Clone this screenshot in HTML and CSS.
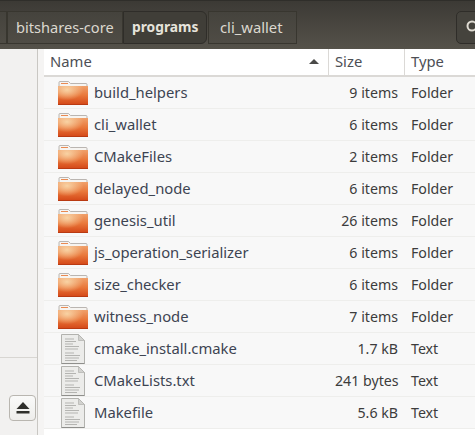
FILE: index.html
```html
<!DOCTYPE html>
<html lang="en">
<head>
    <meta charset="UTF-8">
    <title>cli_wallet</title>
    <link rel="stylesheet" href="styles.css">
</head>
<body>
    <svg class="defs" width="0" height="0">
        <defs>
            <linearGradient id="folder-fill" x1="0" y1="0" x2="0" y2="1">
                <stop offset="0" stop-color="#f0a06a"/>
                <stop offset="0.5" stop-color="#e9773a"/>
                <stop offset="1" stop-color="#d34516"/>
            </linearGradient>
            <radialGradient id="folder-glow" cx="0.3" cy="0.2" r="0.55">
                <stop offset="0" stop-color="#f9d6a8" stop-opacity="0.95"/>
                <stop offset="1" stop-color="#f9d6a8" stop-opacity="0"/>
            </radialGradient>
            <symbol id="folder" viewBox="0 0 30 24">
                <path d="M1 6V1.500Q1 .5 2 .5h8.500l2 2H28q1 0 1 1V6z" fill="#f6f4f1" stroke="#aaa59f" stroke-width=".8"/>
                <rect x="3" y="2" width="7" height="1" fill="#e98a52"/>
                <path d="M0 5h30v18q0 1-1 1H1q-1 0-1-1z" fill="url(#folder-fill)"/>
                <path d="M0 5h30v18q0 1-1 1H1q-1 0-1-1z" fill="url(#folder-glow)"/>
                <rect x="0" y="23" width="30" height="1" fill="#b93a12"/>
            </symbol>
            <symbol id="textfile" viewBox="0 0 24 30">
                <path d="M.5.5h17l6 6v23H.5z" fill="#ececea" stroke="#b2b2ae"/>
                <path d="M.5 29.500h23" stroke="#8f8f8c"/>
                <path d="M17.500.5v6h6z" fill="#d2d2cf" stroke="#b2b2ae" stroke-width=".7"/>
                <path d="M4 5h9M4 7.500h11M4 10h8M4 12.500h14M4 15h13M4 19h9M4 21.500h15M4 24h14M4 26.500h12" stroke="#b4b4b1" stroke-width="1" fill="none"/>
            </symbol>
        </defs>
    </svg>

    <header class="toolbar">
        <nav class="pathbar">
            <span class="crumb stub"></span>
            <span class="crumb first">bitshares-core</span>
            <span class="crumb current">programs</span>
            <span class="crumb last">cli_wallet</span>
        </nav>
        <div class="search-btn">
            <svg width="16" height="16" viewBox="0 0 16 16"><circle cx="7" cy="7" r="4.500" fill="none" stroke="#dfdbd2" stroke-width="2"/></svg>
        </div>
    </header>

    <main class="main">
        <aside class="sidebar">
            <div class="side-places"></div>
            <div class="side-devices">
                <button class="eject" type="button">
                    <svg width="14" height="12" viewBox="0 0 14 12"><path d="M7 0l6.500 7H.5z" fill="#2f2f2b"/><rect x=".5" y="9" width="13" height="2.500" fill="#2f2f2b"/></svg>
                </button>
            </div>
        </aside>
        <div class="gutter"></div>
        <section class="files">
            <div class="head">
                <div class="col-name">Name <span class="sort-arrow"></span></div>
                <div class="col-size">Size</div>
                <div class="col-type">Type</div>
            </div>
            <div class="row"><svg class="icon-folder"><use href="#folder"/></svg><span class="name">build_helpers</span><span class="size">9 items</span><span class="type">Folder</span></div>
            <div class="row"><svg class="icon-folder"><use href="#folder"/></svg><span class="name">cli_wallet</span><span class="size">6 items</span><span class="type">Folder</span></div>
            <div class="row"><svg class="icon-folder"><use href="#folder"/></svg><span class="name">CMakeFiles</span><span class="size">2 items</span><span class="type">Folder</span></div>
            <div class="row"><svg class="icon-folder"><use href="#folder"/></svg><span class="name">delayed_node</span><span class="size">6 items</span><span class="type">Folder</span></div>
            <div class="row"><svg class="icon-folder"><use href="#folder"/></svg><span class="name">genesis_util</span><span class="size">26 items</span><span class="type">Folder</span></div>
            <div class="row"><svg class="icon-folder"><use href="#folder"/></svg><span class="name">js_operation_serializer</span><span class="size">6 items</span><span class="type">Folder</span></div>
            <div class="row"><svg class="icon-folder"><use href="#folder"/></svg><span class="name">size_checker</span><span class="size">6 items</span><span class="type">Folder</span></div>
            <div class="row"><svg class="icon-folder"><use href="#folder"/></svg><span class="name">witness_node</span><span class="size">7 items</span><span class="type">Folder</span></div>
            <div class="row"><svg class="icon-file"><use href="#textfile"/></svg><span class="name">cmake_install.cmake</span><span class="size">1.7 kB</span><span class="type">Text</span></div>
            <div class="row"><svg class="icon-file"><use href="#textfile"/></svg><span class="name">CMakeLists.txt</span><span class="size">241 bytes</span><span class="type">Text</span></div>
            <div class="row"><svg class="icon-file"><use href="#textfile"/></svg><span class="name">Makefile</span><span class="size">5.6 kB</span><span class="type">Text</span></div>
        </section>
    </main>
</body>
</html>
```

FILE: styles.css
```css
*{
    box-sizing: border-box;
}

html, body{
    margin: 0;
    height: 100%;
    overflow: hidden;
}

body{
    display: flex;
    flex-direction: column;
    background-color: white;
    font-family: "Noto Sans", sans-serif;
    font-size: 14.8px;
    color: #3c3c3c;
}

.defs{
    position: absolute;
}

.toolbar{
    height: 49px;
    flex-shrink: 0;
    display: flex;
    justify-content: space-between;
    padding: 10px 0 0 0;
    background: linear-gradient(#3c3a35, #55524a);
    border-top: 1px solid #2f2e2a;
}

.pathbar{
    display: flex;
    height: 33px;
    margin-left: -4px;
}

.crumb{
    display: flex;
    align-items: center;
    height: 33px;
    padding: 0 8px 2px 8px;
    color: #dcd8cf;
    background: linear-gradient(#45433d, #4f4c45);
    border: 1px solid #38362f;
}

.stub{
    width: 11px;
    padding: 0;
}

.first{
    width: 116px;
    font-size: 14.6px;
    white-space: nowrap;
}

.current{
    width: 84px;
    font-size: 13.8px;
    font-weight: bold;
    background: #403e38;
    border-radius: 0 6px 6px 0;
    color: #e6e3db;
    border-color: #2f2d29;
}

.last{
    width: 89px;
    padding: 0 0 2px 11px;
    margin-left: 1px;
}

.search-btn{
    width: 30px;
    height: 33px;
    margin-right: -11px;
    padding: 7px 0 0 8px;
    border: 1px solid #2f2d29;
    border-radius: 5px;
    background: #45433d;
}

.main{
    flex: 1;
    display: flex;
    min-height: 0;
}

.sidebar{
    width: 38px;
    flex-shrink: 0;
    display: flex;
    flex-direction: column;
    background-color: #f2f1f0;
    border-right: 1px solid #c9c7c3;
}

.side-places{
    height: 309px;
    border-bottom: 1px solid #d8d6d2;
}

.side-devices{
    padding: 37px 0 0 9px;
}

.eject{
    display: flex;
    align-items: center;
    justify-content: center;
    width: 27px;
    height: 26px;
    padding: 0;
    background: linear-gradient(#fafaf9, #eeedeb);
    border: 1px solid #b9b6b0;
    border-radius: 4px;
}

.gutter{
    width: 6px;
    flex-shrink: 0;
    background-color: #f5f4f3;
}

.files{
    flex: 1;
    min-width: 0;
}

.head{
    display: flex;
    height: 28px;
    align-items: center;
    border-bottom: 2px solid #dbd9d6;
    color: #4d4f55;
}

.head > div{
    height: 26px;
    padding-top: 2px;
    border-right: 1px solid #dbd9d6;
}

.col-name{
    width: 285px;
    padding-left: 6px;
    position: relative;
}

.sort-arrow{
    position: absolute;
    left: 265px;
    top: 10px;
    border-left: 5px solid transparent;
    border-right: 5px solid transparent;
    border-bottom: 5px solid #4a4a48;
}

.col-size{
    width: 76px;
    padding-left: 6px;
}

.col-type{
    flex: 1;
    padding-left: 6px;
    border-right: none !important;
}

.row{
    display: flex;
    align-items: center;
    height: 32px;
    background-color: #f8f8f8;
    border-bottom: 1px solid #eeeeec;
}

.icon-folder{
    width: 30px;
    height: 24px;
    margin-left: 14px;
    flex-shrink: 0;
}

.icon-file{
    width: 24px;
    height: 30px;
    margin-left: 17px;
    margin-right: 3px;
    flex-shrink: 0;
}

.name{
    width: 247px;
    padding: 0 0 2px 6px;
    color: #3d4452;
}

.size{
    width: 63px;
    padding-bottom: 1px;
    font-size: 14.2px;
    text-align: right;
    white-space: nowrap;
}

.type{
    padding: 0 0 1px 13px;
    font-size: 14.2px;
}
```
